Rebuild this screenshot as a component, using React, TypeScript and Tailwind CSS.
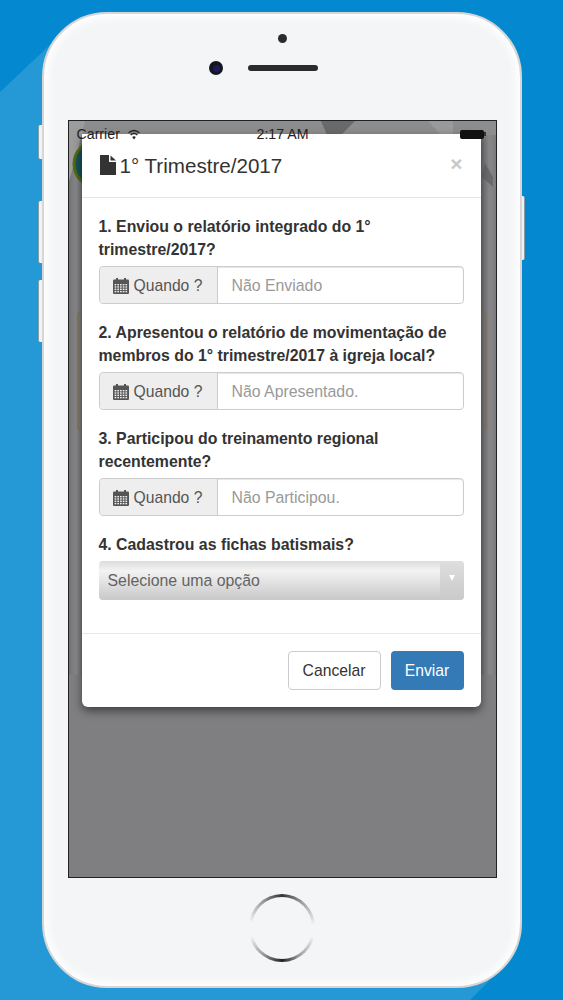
const sans = "font-['Liberation_Sans',Arial,sans-serif]";

function CalendarIcon() {
  const holes = [];
  for (let r = 0; r < 4; r++) {
    for (let c = 0; c < 5; c++) {
      holes.push(<rect key={`${r}-${c}`} x={1.6 + c * 2.7} y={6 + r * 2.3} width="1.7" height="1.4" fill="#eee" />);
    }
  }
  return (
    <svg width="16" height="16" viewBox="0 0 16 16" className="shrink-0">
      <rect x="3" y="0" width="2" height="3" fill="#555" />
      <rect x="11" y="0" width="2" height="3" fill="#555" />
      <rect x="0" y="1.5" width="16" height="14.5" rx="1" fill="#555" />
      {holes}
    </svg>
  );
}

function FileIcon() {
  return (
    <svg width="16" height="20" viewBox="0 0 16 20" className="mb-[2px] shrink-0">
      <path d="M0 0H9V7H16V20H0Z" fill="#333" />
      <path d="M10.5 0.5L16 5.5H10.5Z" fill="#333" />
    </svg>
  );
}

function Question({ lines, placeholder }: { lines: string[]; placeholder: string }) {
  return (
    <div className="mb-[17px]">
      <label className="block text-[15.85px] font-bold leading-[23px] text-[#333]">
        {lines.map((l) => (
          <span key={l} className="block whitespace-nowrap">
            {l}
          </span>
        ))}
      </label>
      <div className="mt-[5px] flex h-[38px] rounded-[4px] border border-[#ccc] shadow-[inset_0_1px_1px_rgba(0,0,0,0.1)]">
        <span className="flex w-[118px] items-center gap-[5px] rounded-l-[4px] border-r border-[#ccc] bg-[#eeeeee] pl-[13px] pt-[1px] text-[15.7px] text-[#555]">
          <CalendarIcon />
          Quando ?
        </span>
        <span className="flex flex-1 items-center pl-[14px] pt-[1px] text-[15.85px] text-[#999]">{placeholder}</span>
      </div>
    </div>
  );
}

export default function App() {
  return (
    <div className={`relative h-[1000px] w-[563px] overflow-hidden bg-[#0488cf] ${sans}`}>
      {/* background facet */}
      <svg className="absolute inset-0" width="563" height="1000" viewBox="0 0 563 1000">
        <polygon points="0,92 54,41 300,500 495,975 470,1000 0,1000" fill="#2598d6" />
      </svg>

      {/* side buttons */}
      <div className="absolute left-[38px] top-[125px] h-[34px] w-[5px] rounded-l-[2px] border-l border-[#8a9aa5] bg-[#eaf4f9]" />
      <div className="absolute left-[38px] top-[201px] h-[62px] w-[5px] rounded-l-[2px] border-l border-[#8a9aa5] bg-[#eaf4f9]" />
      <div className="absolute left-[38px] top-[280px] h-[62px] w-[5px] rounded-l-[2px] border-l border-[#8a9aa5] bg-[#eaf4f9]" />
      <div className="absolute left-[520px] top-[196px] h-[64px] w-[5px] rounded-r-[2px] border-r border-[#8a9aa5] bg-[#eaf4f9]" />

      {/* phone */}
      <div className="absolute left-[42px] top-[12px] flex h-[976px] w-[480px] flex-col items-center rounded-[65px] border-[2px] border-[#d6d6d6] bg-[#f4f5f7] shadow-[inset_0_0_8px_4px_#fff]">
        <div className="relative h-[106px] w-full shrink-0">
          <div className="absolute left-[234px] top-[20px] h-[9px] w-[9px] rounded-full bg-[#2b2b2b]" />
          <div className="absolute left-[165px] top-[47px] flex h-[14px] w-[14px] items-center justify-center rounded-full bg-[#15151f]">
            <div className="h-[7px] w-[7px] rounded-full bg-[#1c1c5a]" />
          </div>
          <div className="absolute left-[204px] top-[51px] h-[6px] w-[70px] rounded-full bg-[#2b2b2e]" />
        </div>

        {/* screen */}
        <div className="relative h-[758px] w-[429px] shrink-0 overflow-hidden border border-[#222] bg-[#7f7e80] px-[13px] pt-[13px]">
          {/* blurred page behind the modal */}
          <svg className="absolute inset-0" width="429" height="758" viewBox="0 0 429 758">
            <defs>
              <linearGradient id="band" x1="0" y1="0" x2="1" y2="0">
                <stop offset="0" stopColor="#727275" />
                <stop offset="0.5" stopColor="#89898b" />
                <stop offset="1" stopColor="#767679" />
              </linearGradient>
            </defs>
            <rect width="429" height="14" fill="#8d8d8d" />
            <rect y="14" width="14" height="540" fill="url(#band)" />
            <rect x="412" y="14" width="17" height="540" fill="url(#band)" />
            <polygon points="252,0 286,0 272,14 258,14" fill="#6a6a6a" />
            <polygon points="359,0 384,0 384,14 372,14" fill="#9a9a9a" />
            <polygon points="0,0 16,0 6,40 0,60" fill="#9c9c9c" />
            <polygon points="416,42 424,56 424,66 413,56" fill="#6a6a6b" />
            <circle cx="28" cy="43" r="23" fill="#17525a" stroke="#4f6d12" strokeWidth="3" />
            <rect x="9" y="192" width="30" height="117" rx="2" fill="none" stroke="#85775d" strokeWidth="1.5" />
            <rect x="390" y="192" width="27" height="117" rx="2" fill="none" stroke="#85775d" strokeWidth="1.5" />
          </svg>

          {/* modal */}
          <div className="relative h-[573px] w-[399px] rounded-b-[6px] bg-white shadow-[0_4px_10px_rgba(0,0,0,0.5)]">
            <div className="flex h-[64px] items-center justify-between border-b border-[#e5e5e5] pl-[18px] pr-[18px]">
              <h4 className="flex items-center gap-[4px] pt-[1px] text-[20.6px] text-[#333]">
                <FileIcon />
                1° Trimestre/2017
              </h4>
              <span className="mb-[4px] text-[21px] font-bold text-[#c8c8c8]">×</span>
            </div>
            <div className="px-[17px] pt-[17px]">
              <Question lines={["1. Enviou o relatório integrado do 1°", "trimestre/2017?"]} placeholder="Não Enviado" />
              <Question lines={["2. Apresentou o relatório de movimentação de", "membros do 1° trimestre/2017 à igreja local?"]} placeholder="Não Apresentado." />
              <Question lines={["3. Participou do treinamento regional", "recentemente?"]} placeholder="Não Participou." />
              <label className="block text-[15.85px] font-bold leading-[23px] text-[#333]">4. Cadastrou as fichas batismais?</label>
              <div className="relative mt-[5px] flex h-[39px] w-[365px] items-center rounded-[4px] bg-[linear-gradient(#dcdcdc,#f3f3f3_25%,#c8c8ca)] pl-[9px] text-[15.85px] text-[#636363]">
                Selecione uma opção
                <div className="absolute right-0 top-0 flex h-full w-[24px] items-start justify-center rounded-r-[4px] bg-gradient-to-b from-[#dedede] to-[#cacacc] pt-[14px]">
                  <div className="h-0 w-0 border-x-[3px] border-t-[6px] border-x-transparent border-t-white" />
                </div>
              </div>
            </div>
            <div className="mt-[33px] flex justify-end gap-[10px] border-t border-[#e8e8e8] pr-[17px] pt-[17px]">
              <button className="h-[39px] w-[93px] rounded-[4px] border border-[#ccc] bg-white text-[15.7px] text-[#333]">Cancelar</button>
              <button className="h-[39px] w-[73px] rounded-[4px] bg-[#337ab7] text-[15.7px] text-white">Enviar</button>
            </div>
          </div>

          {/* status bar */}
          <div className="absolute left-0 top-[6px] flex h-[16px] w-full items-center justify-between pl-[8px] pr-[10px] text-[14.2px] text-[#222]">
            <div className="flex items-center gap-[8px]">
              Carrier
              <svg width="12" height="11" viewBox="0 0 12 11" className="mb-[2px]">
                <path d="M0.6 3.8Q6 -1 11.4 3.8M2.6 6Q6 3 9.4 6" fill="none" stroke="#222" strokeWidth="1.4" />
                <path d="M4.2 8Q6 6.6 7.8 8L6 10.5Z" fill="#222" />
              </svg>
            </div>
            <div className="absolute left-[188px]">2:17 AM</div>
            <div className="mb-[2px] flex items-center">
              <div className="h-[9px] w-[24px] rounded-[2px] bg-[#111]" />
              <div className="h-[4px] w-[2px] bg-[#333]" />
            </div>
          </div>
        </div>

        {/* home button */}
        <div className="mt-[16px] h-[68px] w-[66px] rounded-full bg-[conic-gradient(#333_0deg,#999_35deg,#f4f5f7_85deg,#f4f5f7_105deg,#999_150deg,#222_180deg,#999_215deg,#f4f5f7_255deg,#f4f5f7_280deg,#999_325deg,#333_360deg)] p-[3px]">
          <div className="h-full w-full rounded-full bg-[#f4f5f7]" />
        </div>
      </div>
    </div>
  );
}
